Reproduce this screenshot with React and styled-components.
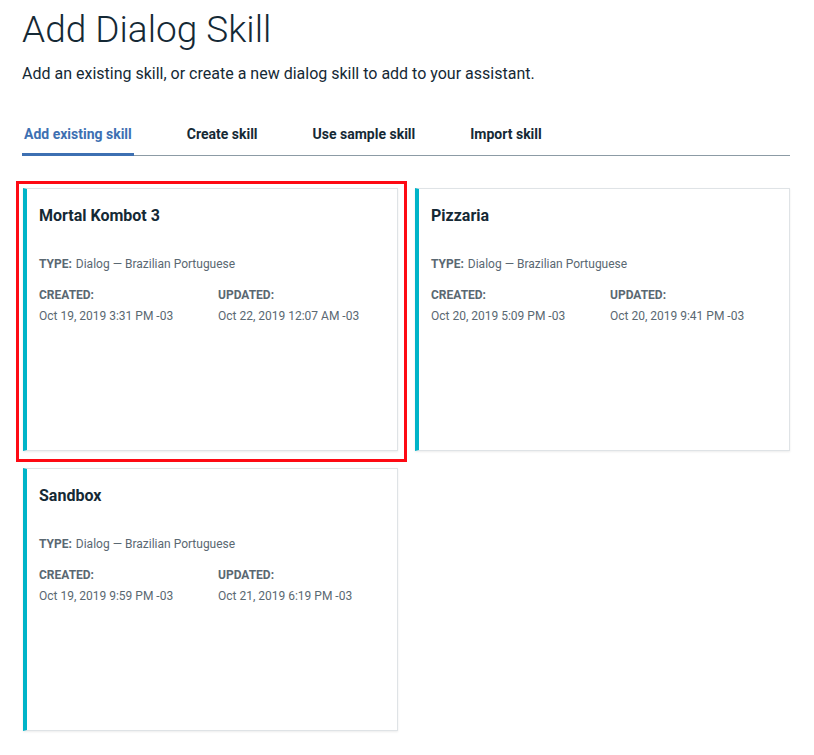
import React from 'react'
import styled, { createGlobalStyle } from 'styled-components'

const GlobalStyle = createGlobalStyle`
  body {
    margin: 0;
    background: #fff;
    font-family: Roboto, "Liberation Sans", sans-serif;
    color: #152935;
  }
`

const Page = styled.div`
  padding: 8px 24px 24px 22px;
`

const Title = styled.h1`
  margin: 0;
  font-size: 37px;
  font-weight: 300;
  line-height: 44px;
  color: #152935;
`

const Subtitle = styled.p`
  margin: 11px 0 0;
  font-size: 16px;
  line-height: 22px;
  color: #152935;
`

const Tabs = styled.nav`
  display: flex;
  gap: 51px;
  margin-top: 40px;
  border-bottom: 1px solid #8c9ba5;
`

const Tab = styled.div`
  padding: 0 2px 10px;
  font-size: 14px;
  font-weight: 700;
  line-height: 18px;
  color: ${p => (p.active ? '#3d70b2' : '#152935')};
  border-bottom: 3px solid ${p => (p.active ? '#3d70b2' : 'transparent')};
  margin-bottom: -1px;
`

const Grid = styled.div`
  display: grid;
  grid-template-columns: repeat(2, 375px);
  column-gap: 17px;
  row-gap: 17px;
  margin-top: 32px;
  padding-left: 1px;
`

const Card = styled.div`
  position: relative;
  height: 263px;
  box-sizing: border-box;
  background: #fff;
  border: 1px solid #dfe3e6;
  border-left: 4px solid #00b4c8;
  box-shadow: 0 1px 2px rgba(0, 0, 0, 0.08);
  padding: 16px 12px;

  ${p => p.selected && `
    &::after {
      content: '';
      position: absolute;
      top: -8px;
      left: -11px;
      right: -10px;
      bottom: -12px;
      border: 3px solid #fe0a14;
      pointer-events: none;
    }
  `}
`

const CardTitle = styled.h2`
  margin: 0;
  font-size: 16px;
  font-weight: 700;
  line-height: 22px;
  color: #152935;
`

const Meta = styled.div`
  margin-top: 29px;
  font-size: 12px;
  line-height: 16px;
  color: #5a6872;
`

const Label = styled.span`
  font-weight: 700;
  margin-right: 4px;
`

const Dates = styled.div`
  display: grid;
  grid-template-columns: 179px 1fr;
  margin-top: 15px;
`

const DateBlock = styled.div`
  display: flex;
  flex-direction: column;
  gap: 5px;
  font-size: 12px;
  line-height: 16px;
  color: #5a6872;
`

const skills = [
  { name: 'Mortal Kombot 3', created: 'Oct 19, 2019 3:31 PM -03', updated: 'Oct 22, 2019 12:07 AM -03', selected: true },
  { name: 'Pizzaria', created: 'Oct 20, 2019 5:09 PM -03', updated: 'Oct 20, 2019 9:41 PM -03' },
  { name: 'Sandbox', created: 'Oct 19, 2019 9:59 PM -03', updated: 'Oct 21, 2019 6:19 PM -03' },
]

export default function App() {
  return (
    <Page>
      <GlobalStyle />
      <Title>Add Dialog Skill</Title>
      <Subtitle>Add an existing skill, or create a new dialog skill to add to your assistant.</Subtitle>
      <Tabs>
        <Tab active>Add existing skill</Tab>
        <Tab>Create skill</Tab>
        <Tab>Use sample skill</Tab>
        <Tab>Import skill</Tab>
      </Tabs>
      <Grid>
        {skills.map(s => (
          <Card key={s.name} selected={s.selected}>
            <CardTitle>{s.name}</CardTitle>
            <Meta>
              <Label>TYPE:</Label>Dialog — Brazilian Portuguese
            </Meta>
            <Dates>
              <DateBlock>
                <Label>CREATED:</Label>
                <span>{s.created}</span>
              </DateBlock>
              <DateBlock>
                <Label>UPDATED:</Label>
                <span>{s.updated}</span>
              </DateBlock>
            </Dates>
          </Card>
        ))}
      </Grid>
    </Page>
  )
}
